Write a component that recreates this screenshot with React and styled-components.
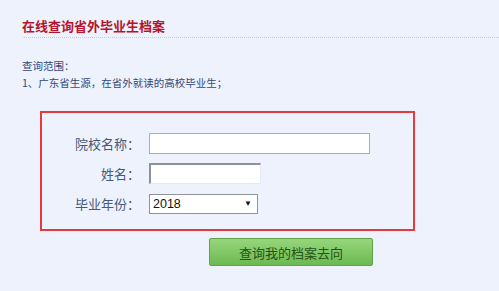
import React from "react";
import styled, { createGlobalStyle } from "styled-components";

const Global = createGlobalStyle`
  html, body { margin: 0; padding: 0; background: #edf2fc; }
  body { width: 499px; height: 291px; overflow: hidden; font-family: "Noto Sans CJK SC", "Noto Sans", sans-serif; }
`;

const Page = styled.div`
  width: 499px;
  height: 291px;
  background: #edf2fc;
  padding-top: 17px;
  box-sizing: border-box;
`;

const Header = styled.div`
  margin-left: 22px;
  border-bottom: 1px dotted #c4ccd9;
  height: 20px;
`;

const Title = styled.h1`
  margin: 0;
  font-size: 13px;
  line-height: 18px;
  font-weight: 700;
  color: #b8132c;
`;

const Scope = styled.div`
  margin: 19px 0 0 22px;
  color: #34497a;
  font-size: 10.5px;
  line-height: 17px;
`;

const Box = styled.div`
  margin: 20px 0 0 40px;
  width: 375px;
  height: 120px;
  box-sizing: border-box;
  border: 2px solid #e63a3f;
  padding-top: 20px;
  display: flex;
  flex-direction: column;
  gap: 9px;
`;

const Row = styled.div`
  display: flex;
  align-items: center;
  height: 21px;
`;

const Label = styled.label`
  width: 98px;
  text-align: right;
  font-size: 13px;
  color: #45597a;
  margin-right: 9px;
  white-space: nowrap;
`;

const TextInput = styled.div`
  width: ${(p) => p.$w}px;
  height: 21px;
  box-sizing: border-box;
  background: #fff;
  border: 1px solid ${(p) => (p.$inset ? "#e4e8ef" : "#a9adb4")};
  ${(p) =>
    p.$inset &&
    `border-top: 2px solid #8e9298; border-left: 2px solid #8e9298;`}
`;

const Select = styled.div`
  width: 109px;
  height: 20px;
  box-sizing: border-box;
  background: #fff;
  border: 1px solid #8f949b;
  display: flex;
  align-items: center;
  justify-content: space-between;
  padding: 0 5px 0 3px;
  font-family: "Liberation Sans", Arial, sans-serif;
  font-size: 12.5px;
  color: #111;
`;

const Arrow = styled.span`
  font-size: 8px;
  color: #111;
`;

const Button = styled.button`
  display: block;
  margin: 7px 0 0 209px;
  width: 164px;
  height: 28px;
  border: 1px solid #64a04a;
  border-radius: 2px;
  background: linear-gradient(#96d67c, #6cb952);
  color: #245416;
  font-family: "Noto Sans CJK SC", sans-serif;
  font-size: 13px;
  padding: 1px 0 0;
`;

export default function App() {
  return (
    <>
      <Global />
      <Page>
        <Header>
          <Title>在线查询省外毕业生档案</Title>
        </Header>
        <Scope>
          <div>查询范围：</div>
          <div>1、广东省生源，在省外就读的高校毕业生；</div>
        </Scope>
        <Box>
          <Row>
            <Label>院校名称：</Label>
            <TextInput $w={221} />
          </Row>
          <Row>
            <Label>姓名：</Label>
            <TextInput $w={112} $inset />
          </Row>
          <Row>
            <Label>毕业年份：</Label>
            <Select>
              <span>2018</span>
              <Arrow>▼</Arrow>
            </Select>
          </Row>
        </Box>
        <Button>查询我的档案去向</Button>
      </Page>
    </>
  );
}
